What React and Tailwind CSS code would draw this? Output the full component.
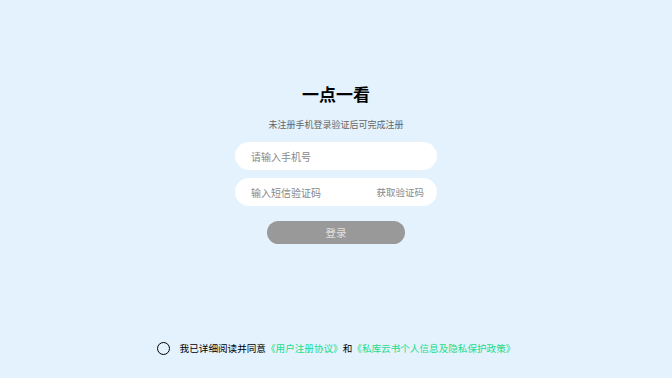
import React, { useState } from 'react';

const App = () => {
    const [agreed, setAgreed] = useState(false);

    return (
        <div
            className="h-screen w-full bg-[#e3f2fd] flex flex-col items-center"
            style={{ fontFamily: '"Noto Sans CJK SC", "Noto Sans", sans-serif' }}
        >
            <div className="flex flex-col items-center pt-[83px]">
                <h1 className="text-[17px] leading-[22px] font-bold text-black">一点一看</h1>
                <p className="mt-[14px] text-[9px] leading-[12px] text-[#666]">未注册手机登录验证后可完成注册</p>

                <div className="mt-[11px] w-[202px] h-[28px] bg-white rounded-full flex items-center px-4">
                    <input
                        className="flex-1 min-w-0 bg-transparent outline-none text-[10px] text-[#333] placeholder:text-[#888]"
                        placeholder="请输入手机号"
                    />
                </div>

                <div className="mt-[8px] w-[202px] h-[28px] bg-white rounded-full flex items-center pl-4 pr-[13px]">
                    <input
                        className="flex-1 min-w-0 bg-transparent outline-none text-[10px] text-[#333] placeholder:text-[#888]"
                        placeholder="输入短信验证码"
                    />
                    <span className="text-[9.5px] text-[#888]">获取验证码</span>
                </div>

                <button className="mt-[15px] w-[138px] h-[23px] rounded-full bg-[#999] text-[10.5px] text-[#e0e0e0]">
                    登录
                </button>
            </div>

            <div className="flex-1" />

            <div className="flex items-center pb-[23px] text-[9.6px] leading-[14px]">
                <button
                    onClick={() => setAgreed(!agreed)}
                    className="w-[13px] h-[13px] rounded-full border border-black mr-[10px]"
                />
                <span className="text-black">我已详细阅读并同意</span>
                <span className="text-[#22dc88]">《用户注册协议》</span>
                <span className="text-black">和</span>
                <span className="text-[#22dc88]">《私库云书个人信息及隐私保护政策》</span>
            </div>
        </div>
    );
};

export default App;
